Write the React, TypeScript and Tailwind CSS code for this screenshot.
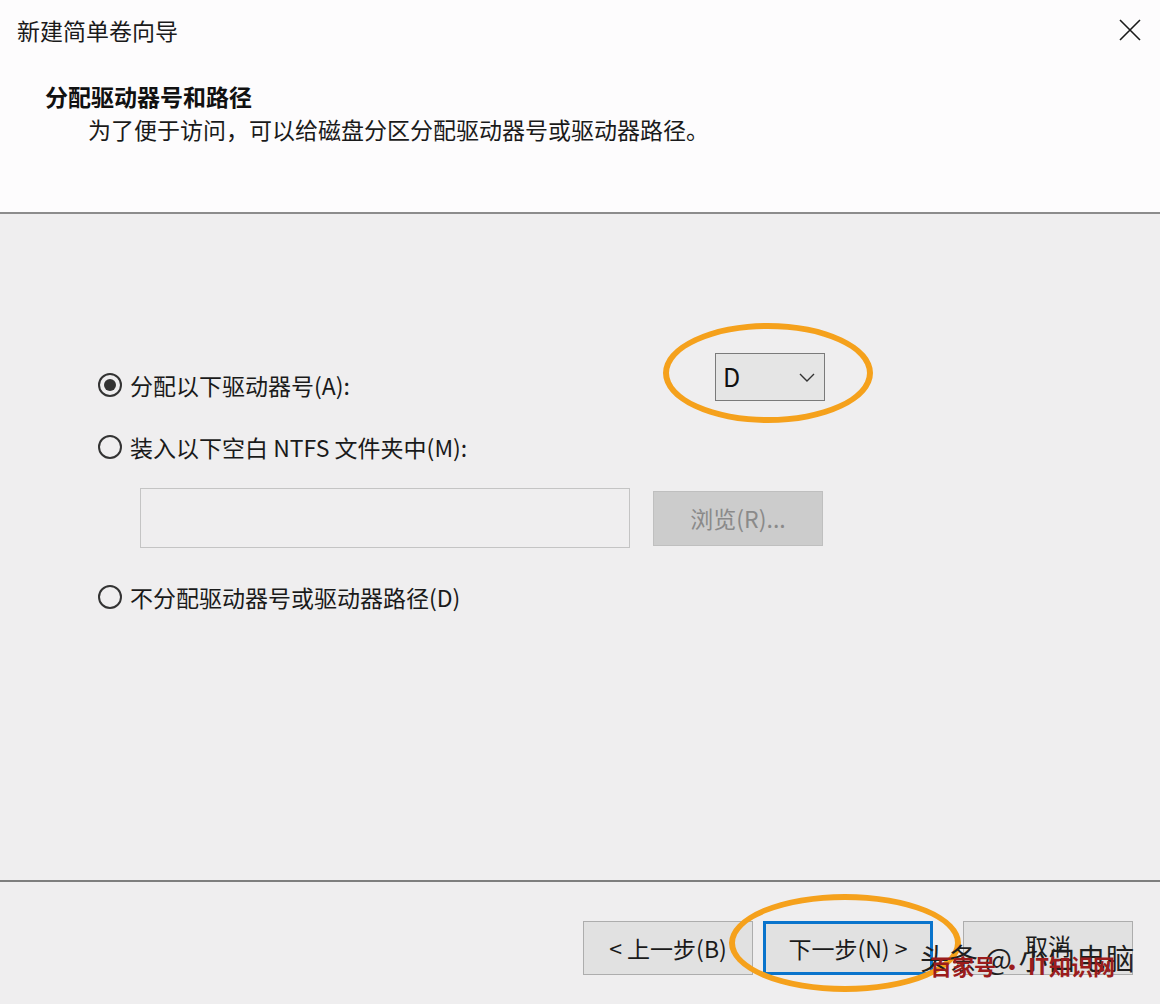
import type { ReactNode } from "react";

const font = { fontFamily: '"Noto Sans CJK SC", "Noto Sans", sans-serif' };

function Radio({ checked, children }: { checked?: boolean; children: ReactNode }) {
  return (
    <div className="flex h-[30px] items-center">
      <span className="grid h-[24px] w-[24px] place-items-center rounded-full border-2 border-[#333333] bg-[#efeeef]">
        {checked && <span className="h-[12px] w-[12px] rounded-full bg-[#333333]" />}
      </span>
      <span className="ml-[8px] text-[23px] leading-[30px] text-[#1a1a1a]">{children}</span>
    </div>
  );
}

function Btn({ children, primary, className = "" }: { children: ReactNode; primary?: boolean; className?: string }) {
  return (
    <div
      className={
        "grid h-[54px] w-[170px] place-items-center bg-[#e1e1e1] text-[23px] text-[#1a1a1a] " +
        (primary ? "border-[3px] border-[#0a74cc]" : "border border-[#adadad]") +
        " " +
        className
      }
    >
      {children}
    </div>
  );
}

export default function App() {
  return (
    <div className="relative flex h-[1004px] w-[1160px] flex-col overflow-hidden bg-[#efeeef]" style={font}>
      <header className="h-[212px] bg-[#fdfcfd]">
        <div className="flex items-start justify-between pl-[17px] pr-[19px] pt-[14px]">
          <div className="text-[23px] leading-[32px] text-[#1a1a1a]">新建简单卷向导</div>
          <svg width="22" height="22" viewBox="0 0 22 22" className="mt-[5px]">
            <path d="M1 1 L21 21 M21 1 L1 21" stroke="#1a1a1a" strokeWidth="1.6" />
          </svg>
        </div>
        <div className="pl-[45px] pt-[34px] text-[23px] font-bold leading-[32px] text-[#111]">分配驱动器号和路径</div>
        <div className="pl-[88px] text-[23px] leading-[34px] text-[#1a1a1a]">
          为了便于访问，可以给磁盘分区分配驱动器号或驱动器路径。
        </div>
      </header>
      <div className="h-[2px] bg-[#8c8c8c]" />

      <main className="h-[666px] pl-[98px] pt-[139px]">
        <div className="flex items-start">
          <div className="mt-[17px] w-[617px]">
            <Radio checked>分配以下驱动器号(A):</Radio>
          </div>
          <div className="flex h-[48px] w-[110px] items-center justify-between border border-[#7a7a7a] bg-[#e5e5e5] pl-[7px] pr-[9px]">
            <span className="text-[25px] text-[#111]">D</span>
            <svg width="16" height="9" viewBox="0 0 16 9">
              <path d="M1 1 L8 8 L15 1" fill="none" stroke="#333" strokeWidth="1.4" />
            </svg>
          </div>
        </div>
        <div className="mt-[31px]">
          <Radio>装入以下空白 NTFS 文件夹中(M):</Radio>
        </div>
        <div className="ml-[42px] mt-[26px] flex items-center gap-[23px]">
          <div className="h-[60px] w-[490px] border border-[#c4c4c4] bg-[#efeeef]" />
          <div className="grid h-[55px] w-[170px] place-items-center border border-[#bfbfbf] bg-[#cccccc] text-[23px] text-[#8a8a8a]">
            浏览(R)...
          </div>
        </div>
        <div className="mt-[34px]">
          <Radio>不分配驱动器号或驱动器路径(D)</Radio>
        </div>
      </main>

      <div className="h-[2px] bg-[#7e7e7e]" />
      <footer className="flex flex-1 items-start justify-end pr-[27px] pt-[39px]">
        <Btn>&lt; 上一步(B)</Btn>
        <Btn primary className="ml-[10px]">下一步(N) &gt;</Btn>
        <Btn className="ml-[30px]">
          <span className="-mt-[6px]">取消</span>
        </Btn>
      </footer>

      <div className="pointer-events-none absolute left-[663px] top-[323px] h-[100px] w-[210px] rounded-[50%] border-[6px] border-[#f5a11c]" />
      <div className="pointer-events-none absolute left-[729px] top-[894px] h-[98px] w-[232px] rounded-[50%] border-[6px] border-[#f5a11c]" />

      {/* watermark */}
      <div className="pointer-events-none absolute left-[920px] top-[940px] text-[29px] leading-[34px] text-[#1f1f1f]">头条 @ 小白电脑</div>
      <div className="pointer-events-none absolute left-[930px] top-[953px] text-[22px] font-bold leading-[24px] text-[#9b1c1c]">百家号 · IT知识网</div>
    </div>
  );
}
